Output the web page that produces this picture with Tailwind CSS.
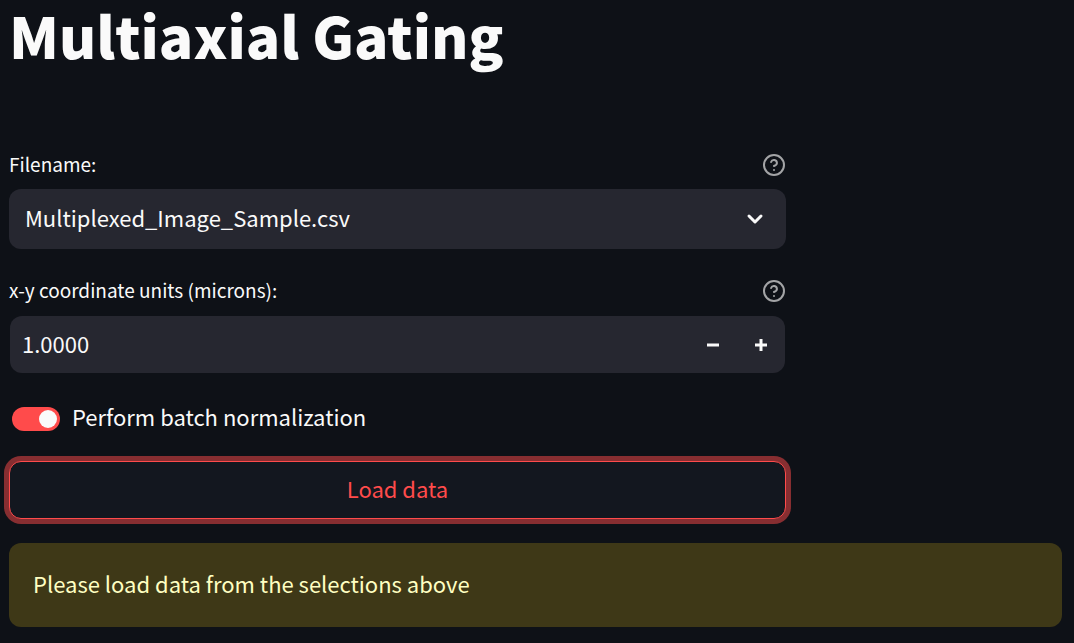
<!DOCTYPE html>
<html lang="en">
<head>
<meta charset="utf-8">
<meta name="viewport" content="width=device-width, initial-scale=1">
<title>Multiaxial Gating</title>
<script src="https://cdn.jsdelivr.net/npm/@tailwindcss/browser@4"></script>
</head>
<body class="min-h-screen bg-[#0e1117] font-['Noto_Sans_CJK_SC','Noto_Sans',sans-serif] text-[22px] leading-8 text-[#fafafa]">
<main class="pr-3 pl-[9px] pb-4">
  <h1 class="pb-[82px] text-[57px] leading-[68px] font-black">Multiaxial Gating</h1>

  <form class="grid grid-cols-[3fr_1fr] gap-[17px]">
    <div class="min-w-0">
      <div class="flex h-[39px] items-start justify-between">
        <label for="filename" class="text-[19px] leading-7">Filename:</label>
        <button type="button" aria-label="Help for filename" class="pt-[3px]">
          <svg class="size-6" viewBox="0 0 24 24" fill="none" stroke="#a3a4a6" stroke-width="2" stroke-linecap="round" stroke-linejoin="round"><circle cx="12" cy="12" r="10"/><path d="M9.09 9a3 3 0 0 1 5.83 1c0 2-3 3-3 3"/><path d="M12 17h.01"/></svg>
        </button>
      </div>
      <div class="grid items-center">
        <select id="filename" class="col-start-1 row-start-1 h-[60px] w-full appearance-none rounded-xl bg-[#262730] pr-14 pb-1 pl-4 outline-none">
          <option>Multiplexed_Image_Sample.csv</option>
        </select>
        <svg class="pointer-events-none col-start-1 row-start-1 mr-[19px] size-6 justify-self-end" viewBox="0 0 24 24" fill="none" stroke="#fafafa" stroke-width="3" stroke-linecap="round" stroke-linejoin="round"><path d="M6 9l6 6 6-6"/></svg>
      </div>

      <div class="mt-[27px] flex h-10 items-start justify-between">
        <label for="units" class="text-[19px] leading-7">x-y coordinate units (microns):</label>
        <button type="button" aria-label="Help for units" class="pt-[3px]">
          <svg class="size-6" viewBox="0 0 24 24" fill="none" stroke="#a3a4a6" stroke-width="2" stroke-linecap="round" stroke-linejoin="round"><circle cx="12" cy="12" r="10"/><path d="M9.09 9a3 3 0 0 1 5.83 1c0 2-3 3-3 3"/><path d="M12 17h.01"/></svg>
        </button>
      </div>
      <div class="mx-px flex h-[57px] overflow-hidden rounded-xl bg-[#262730]">
        <input id="units" type="text" inputmode="decimal" value="1.0000" class="min-w-0 flex-1 px-3 pb-1 outline-none">
        <button type="button" aria-label="Decrease" class="flex w-12 items-center justify-center">
          <svg class="size-6" viewBox="0 0 24 24" fill="#fafafa"><path d="M6 10.5h12v3H6z"/></svg>
        </button>
        <button type="button" aria-label="Increase" class="flex w-12 items-center justify-center">
          <svg class="size-6" viewBox="0 0 24 24" fill="#fafafa"><path d="M6 10.5h4.5V6h3v4.5H18v3h-4.5V18h-3v-4.5H6z"/></svg>
        </button>
      </div>

      <label class="mt-[27px] ml-[3px] flex w-fit items-center gap-3">
        <input type="checkbox" role="switch" checked class="h-6 w-12 appearance-none rounded-full bg-[#31333f] p-[3px] before:block before:size-[18px] before:rounded-full before:bg-[#fafafa] checked:bg-[#ff4b4b] checked:before:ml-auto">
        <span class="pb-1.5">Perform batch normalization</span>
      </label>

      <button type="button" class="mt-[23px] block h-[58px] w-full rounded-xl border border-[#ff4b4b] bg-[#13171f] pb-1 text-[#ff4b4b] shadow-[0_0_0_5px_rgba(255,75,75,0.5)]">Load data</button>
    </div>
  </form>

  <div role="alert" class="mt-6 rounded-xl bg-[#3e3817] px-6 pt-6 pb-7 text-[#ffffc2]">Please load data from the selections above</div>
</main>
</body>
</html>
